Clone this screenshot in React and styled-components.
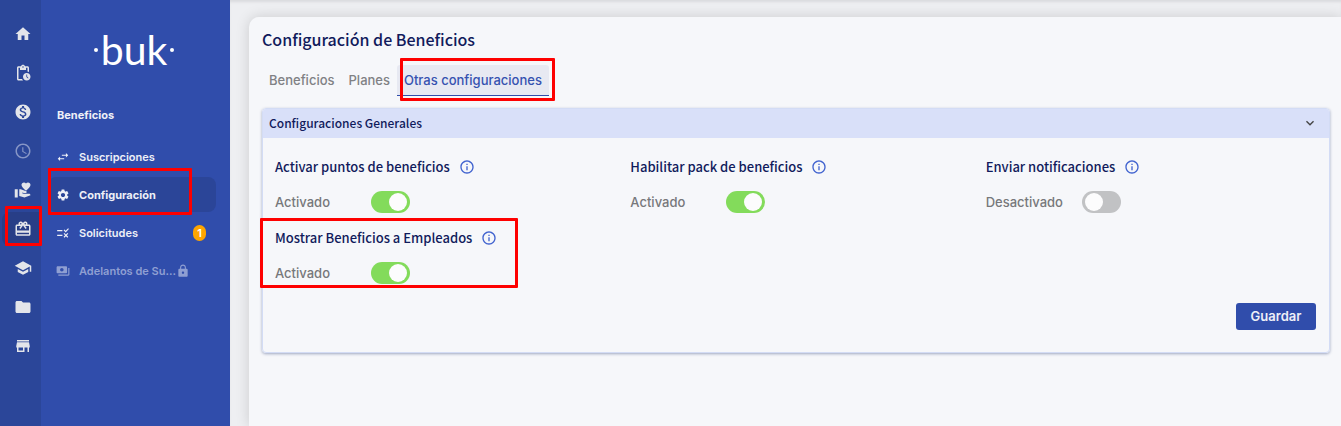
import React from 'react';
import styled, { createGlobalStyle } from 'styled-components';
import {
  MdHome,
  MdPendingActions,
  MdMonetizationOn,
  MdSchedule,
  MdVolunteerActivism,
  MdCardGiftcard,
  MdSchool,
  MdFolder,
  MdStore,
  MdSwapHoriz,
  MdSettings,
  MdRule,
  MdPayments,
  MdLock,
  MdInfoOutline,
  MdExpandMore
} from 'react-icons/md';

const sourceSans = `'Noto Sans CJK SC', 'Noto Sans', sans-serif`;
const inter = `Inter, 'Liberation Sans', sans-serif`;

const GlobalStyle = createGlobalStyle`
  * {
    box-sizing: border-box;
  }
  body {
    margin: 0;
    font-family: ${inter};
    background: #eeeff2;
  }
  button {
    font-family: inherit;
    border: 0;
    cursor: pointer;
  }
`

const Page = styled.div`
  display: flex;
  min-height: 100vh;
  overflow: hidden;
`

// red rectangle drawn around its parent
const Mark = styled.span`
  position: absolute;
  inset: ${(props) => props.$inset};
  border: 3px solid #fe0000;
  border-radius: 1px;
  pointer-events: none;
  z-index: 2;
`

const Rail = styled.nav`
  width: 41px;
  flex-shrink: 0;
  padding-top: 17px;
  background: #2b4699;
  display: flex;
  flex-direction: column;
  gap: 5px;
`

const RailLink = styled.a`
  position: relative;
  display: flex;
  align-items: center;
  justify-content: center;
  height: 34px;
  margin-left: 2px;
  padding-left: 3px;
  font-size: 18px;
  border-radius: 8px 0 0 8px;
  color: ${(props) => props.$dim ? '#8796c6' : '#e3e5ea'};
  background: ${(props) => props.$active ? '#283e87' : 'transparent'};
`

const Sidebar = styled.aside`
  width: 189px;
  flex-shrink: 0;
  background: #304dab;
`

const Logo = styled.div`
  display: flex;
  align-items: center;
  justify-content: center;
  gap: 3px;
  height: 48px;
  margin: 26px 3px 0 0;
  font-family: Lato, sans-serif;
  font-size: 41px;
  line-height: 48px;
  color: #fff;
  &::before, &::after {
    content: '';
    width: 4px;
    height: 4px;
    border-radius: 50%;
    background: #fff;
  }
`

const SideTitle = styled.h2`
  margin: 33px 0 16px 16px;
  font-size: 11px;
  line-height: 16px;
  font-weight: 700;
  color: #eef0f7;
`

const Menu = styled.ul`
  list-style: none;
  margin: 0;
  padding: 0 14px 0 7px;
`

const MenuLink = styled.a`
  position: relative;
  display: flex;
  align-items: center;
  height: 35px;
  margin-bottom: 3px;
  padding: 0 10px 0 8px;
  border-radius: 8px;
  font-size: 11px;
  font-weight: ${(props) => props.$active ? 700 : 600};
  text-decoration: none;
  white-space: nowrap;
  color: ${(props) => props.$dim ? '#8f9fd2' : '#eef0f7'};
  background: ${(props) => props.$active ? '#2b4598' : 'transparent'};
  > svg:first-child {
    font-size: 14px;
    margin-right: 9px;
  }
`

const Badge = styled.span`
  margin-left: auto;
  width: 13px;
  height: 16px;
  border-radius: 7px;
  background: #fea500;
  color: #fff;
  font-size: 11px;
  line-height: 16px;
  text-align: center;
`

const Main = styled.main`
  flex: 1;
  min-width: 0;
  display: flex;
  flex-direction: column;
  padding: 17px 0 0 19px;
  box-shadow: inset 0 3px 3px -1px #d9dadd;
`

const Card = styled.section`
  flex: 1;
  padding: 11px 11px 0 13px;
  background: #f6f7fa;
  border-radius: 10px 0 0 0;
  box-shadow: 0 0 14px rgba(0, 0, 0, 0.15);
`

const Title = styled.h1`
  margin: 0 0 15px;
  font-family: ${sourceSans};
  font-size: 16px;
  line-height: 22px;
  font-weight: 500;
  color: #111b5c;
`

const Tabs = styled.div`
  display: flex;
  margin-bottom: 12px;
`

const Tab = styled.button`
  position: relative;
  height: 31px;
  padding: 0 7px;
  font-size: 13px;
  font-weight: 500;
  border-radius: 3px 3px 0 0;
  border-bottom: 1px solid ${(props) => props.$active ? '#304dab' : 'transparent'};
  color: ${(props) => props.$active ? '#3552b0' : '#808184'};
  background: ${(props) => props.$active ? '#e7e9f2' : 'transparent'};
`

const Panel = styled.div`
  border: 1px solid #d3dcf5;
  border-radius: 4px;
  box-shadow: 0 1px 3px rgba(30, 50, 110, 0.4);
`

const PanelHeader = styled.button`
  display: flex;
  align-items: center;
  justify-content: space-between;
  width: 100%;
  height: 29px;
  padding: 0 11px 2px 6px;
  border-radius: 3px 3px 0 0;
  background: #d9e0f9;
  font-family: ${sourceSans};
  font-size: 12px;
  line-height: 20px;
  font-weight: 500;
  color: #111b5c;
  svg {
    font-size: 16px;
    color: #444;
  }
`

const Settings = styled.div`
  display: grid;
  grid-template-columns: repeat(3, 1fr);
  row-gap: 13px;
  padding: 17px 0 19px;
`

const Setting = styled.div`
  position: relative;
  padding: 0 12px;
`

const SettingTitle = styled.div`
  display: flex;
  align-items: center;
  gap: 9px;
  height: 24px;
  margin-bottom: 12px;
  font-family: ${sourceSans};
  font-size: 13px;
  line-height: 24px;
  font-weight: 500;
  color: #111b5c;
  svg {
    font-size: 16px;
    color: #4163cf;
  }
`

const SettingRow = styled.div`
  display: flex;
  align-items: center;
  height: 22px;
  font-size: 13px;
  font-weight: 500;
  color: #77787b;
  label {
    width: 96px;
  }
`

const Toggle = styled.input`
  appearance: none;
  display: flex;
  align-items: center;
  width: 39px;
  height: 22px;
  margin: 0;
  padding: 0 3px;
  border-radius: 11px;
  background: #c1c2c4;
  cursor: pointer;
  &::before {
    content: '';
    width: 18px;
    height: 18px;
    border-radius: 50%;
    background: #fcfcfd;
  }
  &:checked {
    justify-content: flex-end;
    background: #83db5b;
  }
`

const Actions = styled.div`
  display: flex;
  justify-content: flex-end;
  padding: 0 13px 22px;
`

const SaveButton = styled.button`
  width: 80px;
  height: 27px;
  padding: 0 0 2px;
  border-radius: 3px;
  background: #304dab;
  color: #eef0f7;
  font-size: 13px;
  font-weight: 600;
`

const sections = [
  { name: 'Inicio', Icon: MdHome },
  { name: 'Tareas', Icon: MdPendingActions },
  { name: 'Remuneraciones', Icon: MdMonetizationOn },
  { name: 'Asistencia', Icon: MdSchedule, dim: true },
  { name: 'Bienestar', Icon: MdVolunteerActivism },
  { name: 'Beneficios', Icon: MdCardGiftcard, active: true },
  { name: 'Capacitación', Icon: MdSchool },
  { name: 'Documentos', Icon: MdFolder },
  { name: 'Tienda', Icon: MdStore }
];

const menu = [
  { name: 'Suscripciones', Icon: MdSwapHoriz },
  { name: 'Configuración', Icon: MdSettings, active: true },
  { name: 'Solicitudes', Icon: MdRule, count: 1 },
  { name: 'Adelantos de Su...', Icon: MdPayments, dim: true }
];

const tabs = ['Beneficios', 'Planes', 'Otras configuraciones'];

const initialSettings = [
  { id: 'puntos', title: 'Activar puntos de beneficios', on: true },
  { id: 'pack', title: 'Habilitar pack de beneficios', on: true },
  { id: 'notificaciones', title: 'Enviar notificaciones', on: false },
  { id: 'mostrar', title: 'Mostrar Beneficios a Empleados', on: true, marked: true }
];

export default class App extends React.Component {
  state = {
    tab: 'Otras configuraciones',
    settings: initialSettings
  }

  toggle = (id) => {
    this.setState({
      settings: this.state.settings.map((s) => s.id === id ? { ...s, on: !s.on } : s)
    });
  }

  render = () => {
    const { tab, settings } = this.state;

    return (
      <Page>
        <GlobalStyle />
        <Rail>
          {sections.map(({ name, Icon, active, dim }) => (
            <RailLink href="#" key={name} aria-label={name} $active={active} $dim={dim}>
              <Icon />
              {active && <Mark $inset="-6px -1px 0 3px" />}
            </RailLink>
          ))}
        </Rail>
        <Sidebar>
          <Logo>buk</Logo>
          <SideTitle>Beneficios</SideTitle>
          <Menu>
            {menu.map(({ name, Icon, active, dim, count }) => (
              <li key={name}>
                <MenuLink href="#" $active={active} $dim={dim}>
                  <Icon />
                  {name}
                  {dim && <MdLock size={14} />}
                  {count && <Badge>{count}</Badge>}
                  {active && <Mark $inset="-9px 24px -3px 0" />}
                </MenuLink>
              </li>
            ))}
          </Menu>
        </Sidebar>
        <Main>
          <Card>
            <Title>Configuración de Beneficios</Title>
            <Tabs>
              {tabs.map((name) => (
                <Tab key={name} $active={name === tab} onClick={() => this.setState({ tab: name })}>
                  {name}
                  {name === 'Otras configuraciones' && <Mark $inset="-7px -6px -6px 3px" />}
                </Tab>
              ))}
            </Tabs>
            <Panel>
              <PanelHeader>
                Configuraciones Generales
                <MdExpandMore />
              </PanelHeader>
              <Settings>
                {settings.map(({ id, title, on, marked }) => (
                  <Setting key={id}>
                    <SettingTitle>
                      {title}
                      <MdInfoOutline />
                    </SettingTitle>
                    <SettingRow>
                      <label htmlFor={id}>{on ? 'Activado' : 'Desactivado'}</label>
                      <Toggle type="checkbox" id={id} checked={on} onChange={() => this.toggle(id)} />
                    </SettingRow>
                    {marked && <Mark $inset="-8px 100px -4px -3px" />}
                  </Setting>
                ))}
              </Settings>
              <Actions>
                <SaveButton>Guardar</SaveButton>
              </Actions>
            </Panel>
          </Card>
        </Main>
      </Page>
    )
  }
}
